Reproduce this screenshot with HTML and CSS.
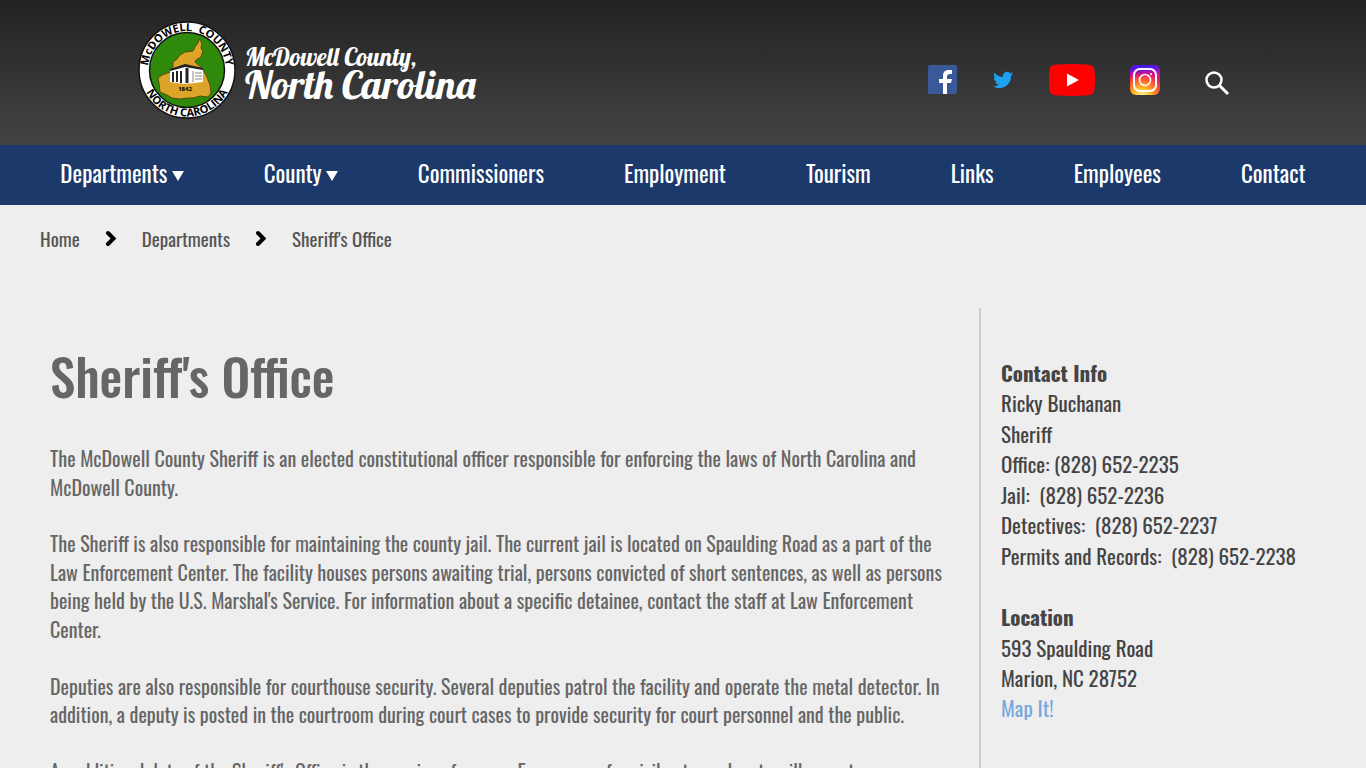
FILE: index.html
```
<!DOCTYPE html>
<html lang="en">
<head>
    <meta charset="UTF-8">
    <meta name="viewport" content="width=device-width, initial-scale=1.0">
    <title>Sheriff's Office</title>
    <link rel="stylesheet" href="styles.css">
</head>
<body>
    <header class="site-header">
        <a class="logo" href="#">
            <svg class="seal" viewBox="0 0 98 98" role="img" aria-label="McDowell County seal">
                <defs>
                    <path id="arc-top" d="M10 49a39 39 0 0 1 78 0"/>
                    <path id="arc-bottom" d="M2.500 49a46.500 46.500 0 0 0 93 0"/>
                </defs>
                <circle cx="49" cy="49" r="48" fill="#fff" stroke="#111" stroke-width="1.500"/>
                <circle cx="49" cy="49" r="37.500" fill="#2f8a0c" stroke="#111" stroke-width="1.500"/>
                <path d="M61 18L64 22 63 27 65 30 63 36 58 39 57 41 64 47 69 56 72 64 73 72 70 76 62 75 55 77 50 77 42 78 34 77 29 74 22 71 21 62 20 57 24 54 32 51 35 46 35 41 39 38 42 34 47 31 55 30 57 26 60 22z" fill="#dca428" stroke="#5a4a08" stroke-width="1"/>
                <path d="M32 49l15-5v19l-15-2zM47 44l18 4v13l-18 2z" fill="#fff"/>
                <path d="M32 48l15-5 18 4v2l-18-3-15 4z" fill="#222"/>
                <path d="M35 51v10M39 50v11M43 50v12" stroke="#222" stroke-width="2"/>
                <path d="M55 50v11M57 52h7M57 55h7M57 58h7" stroke="#888" stroke-width="1"/>
                <path d="M49 47v15" stroke="#222" stroke-width="3"/>
                <text class="seal-year" x="47" y="70">1842</text>
                <text class="seal-text"><textPath href="#arc-top" startOffset="50%">McDOWELL &#160;COUNTY</textPath></text>
                <text class="seal-text"><textPath href="#arc-bottom" startOffset="50%">NORTH CAROLINA</textPath></text>
            </svg>
            <span class="logo-name">
                <span class="logo-county">McDowell County,</span>
                <span class="logo-state">North Carolina</span>
            </span>
        </a>
        <div class="social">
            <a href="#" aria-label="Facebook">
                <svg width="30" height="30" viewBox="0 0 30 30">
                    <rect width="29" height="29" rx="2" fill="#3b5998"/>
                    <path d="M15 29V18h-4v-4h4v-3c0-4 2-6 6-6h3v4h-2c-2 0-3 1-3 2v3h5l-1 4h-4v11z" fill="#fff"/>
                </svg>
            </a>
            <a href="#" aria-label="Twitter">
                <svg width="21" height="20" viewBox="0 0 25 24">
                    <path d="M24 4.600a10 10 0 0 1-2.800.8 5 5 0 0 0 2.200-2.700c-1 .6-2 1-3.100 1.200a4.900 4.900 0 0 0-8.400 4.500A14 14 0 0 1 1.700 3.200a4.900 4.900 0 0 0 1.500 6.500 4.900 4.900 0 0 1-2.200-.6 4.900 4.900 0 0 0 3.900 4.900 5 5 0 0 1-2.200.1 4.900 4.900 0 0 0 4.600 3.400A9.900 9.900 0 0 1 0 19.500 14 14 0 0 0 21.500 7.100 10 10 0 0 0 24 4.600z" fill="#1da1f2"/>
                </svg>
            </a>
            <a href="#" aria-label="YouTube">
                <svg width="46" height="32" viewBox="0 0 46 32">
                    <path d="M6 .8Q23-.8 40 .8q5 .4 5.500 5.200 1 10 0 20-.5 4.800-5.500 5.200-17 1.600-34 0Q1 30.800.5 26q-1-10 0-20Q1 1.200 6 .8z" fill="#f00"/>
                    <path d="M18 9.500v13L30 16z" fill="#fff"/>
                </svg>
            </a>
            <a href="#" aria-label="Instagram">
                <svg width="30" height="30" viewBox="0 0 30 30">
                    <defs>
                        <radialGradient id="insta-warm" cx=".4" cy="1.050" r="1.050">
                            <stop offset="0" stop-color="#fff4b0"/>
                            <stop offset=".25" stop-color="#ffc529"/>
                            <stop offset=".5" stop-color="#ff6a2a"/>
                            <stop offset=".75" stop-color="#e6156c"/>
                            <stop offset="1" stop-color="#b010b8"/>
                        </radialGradient>
                        <linearGradient id="insta-cool" x1=".3" y1="0" x2=".4" y2="1">
                            <stop offset="0" stop-color="#3a18f0"/>
                            <stop offset=".12" stop-color="#5a14e6"/>
                            <stop offset=".4" stop-color="#a010c0" stop-opacity="0"/>
                        </linearGradient>
                    </defs>
                    <rect width="30" height="30" rx="6" fill="url(#insta-warm)"/>
                    <rect width="30" height="30" rx="6" fill="url(#insta-cool)"/>
                    <rect x="4" y="4" width="22" height="22" rx="6" fill="none" stroke="#fff" stroke-width="2"/>
                    <circle cx="15" cy="15" r="5.500" fill="none" stroke="#fff" stroke-width="1.500"/>
                    <circle cx="21" cy="9" r="1" fill="#fff"/>
                </svg>
            </a>
            <button type="button" class="search" aria-label="Search">
                <svg width="26" height="26" viewBox="0 0 26 26" fill="none" stroke="#fff">
                    <circle cx="10" cy="10" r="7.500" stroke-width="2.500"/>
                    <path d="M15.500 15.500l8.500 8.500" stroke-width="3"/>
                </svg>
            </button>
        </div>
    </header>

    <nav class="main-nav">
        <a href="#">Departments <span class="caret"></span></a>
        <a href="#">County <span class="caret"></span></a>
        <a href="#">Commissioners</a>
        <a href="#">Employment</a>
        <a href="#">Tourism</a>
        <a href="#">Links</a>
        <a href="#">Employees</a>
        <a href="#">Contact</a>
    </nav>

    <nav class="breadcrumb" aria-label="Breadcrumb">
        <a href="#">Home</a>
        <svg width="12" height="16" viewBox="0 0 12 16"><path d="M3 3L8.500 8.500 3 14" fill="none" stroke="#000" stroke-width="4" stroke-linecap="round"/></svg>
        <a href="#">Departments</a>
        <svg width="12" height="16" viewBox="0 0 12 16"><path d="M3 3L8.500 8.500 3 14" fill="none" stroke="#000" stroke-width="4" stroke-linecap="round"/></svg>
        <a href="#">Sheriff's Office</a>
    </nav>

    <div class="page">
        <main class="content">
            <h1>Sheriff's Office</h1>
            <p>The McDowell County Sheriff is an elected constitutional officer responsible for enforcing the laws of North Carolina and McDowell County.</p>
            <p>The Sheriff is also responsible for maintaining the county jail. The current jail is located on Spaulding Road as a part of the Law Enforcement Center. The facility houses persons awaiting trial, persons convicted of short sentences, as well as persons being held by the U.S. Marshal's Service. For information about a specific detainee, contact the staff at Law Enforcement Center.</p>
            <p>Deputies are also responsible for courthouse security. Several deputies patrol the facility and operate the metal detector. In addition, a deputy is posted in the courtroom during court cases to provide security for court personnel and the public.</p>
            <p>An additional duty of the Sheriff's Office is the service of papers. Every paper for civil entry, a deputy will execute.</p>
        </main>
        <aside class="sidebar">
            <h2>Contact Info</h2>
            <p>
                Ricky Buchanan<br>
                Sheriff<br>
                Office: (828) 652-2235<br>
                Jail: &nbsp;(828) 652-2236<br>
                Detectives: &nbsp;(828) 652-2237<br>
                Permits and Records: &nbsp;(828) 652-2238
            </p>
            <h2>Location</h2>
            <p>
                593 Spaulding Road<br>
                Marion, NC 28752<br>
                <a href="#">Map It!</a>
            </p>
        </aside>
    </div>
</body>
</html>
```
FILE: styles.css
```
* {
    box-sizing: border-box;
}
body {
    margin: 0;
    font-family: Oswald, "Open Sans Condensed", sans-serif;
    background-color: #eee;
    color: #666;
}
a {
    text-decoration: none;
}

/* Header */
.site-header {
    display: flex;
    justify-content: space-between;
    align-items: center;
    padding: 21px 136px 26px 138px;
    background: linear-gradient(#222, #444);
}
.logo {
    display: flex;
    align-items: center;
    gap: 9px;
    color: #fff;
}
.seal {
    width: 98px;
    height: 98px;
}
.seal-text {
    font-family: "Open Sans", sans-serif;
    font-size: 11px;
    font-weight: 700;
    text-anchor: middle;
}
.seal-year {
    font-family: "Open Sans", sans-serif;
    font-size: 6px;
    font-weight: 700;
    text-anchor: middle;
}
.logo-name {
    display: flex;
    flex-direction: column;
    font-family: Lobster, cursive;
}
.logo-county {
    font-size: 25px;
    line-height: 28px;
}
.logo-state {
    font-size: 40px;
    line-height: 26px;
}
.social {
    display: flex;
    align-items: center;
    gap: 35px;
    padding-top: 20px;
}
.social a {
    display: flex;
}
.search {
    display: flex;
    padding: 6px 0 0 9px;
    border: none;
    background: none;
    cursor: pointer;
}

/* Main menu */
.main-nav {
    display: flex;
    justify-content: center;
    gap: 80px;
    min-height: 60px;
    background-color: #1b396b;
}
.main-nav a {
    color: #fff;
    font-size: 23px;
    line-height: 57px;
    white-space: nowrap;
}
.caret {
    display: inline-block;
    margin-left: -1px;
    border-top: 10px solid #fff;
    border-left: 6px solid transparent;
    border-right: 6px solid transparent;
    vertical-align: 2px;
}

.breadcrumb {
    display: flex;
    align-items: center;
    gap: 25px;
    padding: 20px 40px;
}
.breadcrumb a {
    color: #555;
    font-size: 19px;
    line-height: 26px;
}

/* Page columns */
.page {
    display: flex;
    margin-top: 37px;
}
.content {
    flex: 1;
    padding: 0 35px 40px 50px;
}
.content h1 {
    margin: 27px 0 29px;
    font-size: 51px;
    font-weight: 500;
    line-height: 80px;
}
.content p {
    margin: 0 0 28px;
    font-size: 20px;
    line-height: 1.43;
}
.sidebar {
    width: 387px;
    padding: 50px 20px;
    border-left: 2px solid #ccc;
    color: #444;
    font-size: 21px;
    line-height: 1.45;
}
.sidebar h2 {
    margin: 0;
    font-size: 21px;
    font-weight: 700;
}
.sidebar p {
    margin: 0 0 31px;
}
.sidebar a {
    color: #7aa7dc;
}
```
